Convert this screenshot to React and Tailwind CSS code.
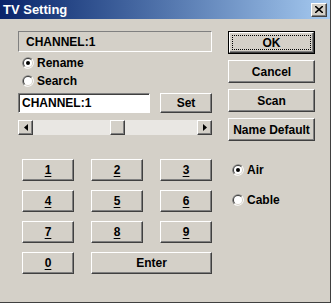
import React from 'react';

const font = { fontFamily: '"Liberation Sans", Arial, sans-serif' };

function Btn({ children, className = '', isDefault = false }) {
  if (isDefault) {
    return (
      <div className={`border border-black bg-[#d4d0c8] ${className}`}>
        <div className="h-full border-t border-l border-t-white border-l-white border-b border-r border-b-[#404040] border-r-[#404040] shadow-[inset_-1px_-1px_0_#808080] p-[2px]">
          <div className="flex h-full items-center justify-center border border-dotted border-black text-[12px] font-bold text-black">
            {children}
          </div>
        </div>
      </div>
    );
  }
  return (
    <div
      className={`flex items-center justify-center bg-[#d4d0c8] border-t border-l border-t-white border-l-white border-b border-r border-b-[#404040] border-r-[#404040] shadow-[inset_-1px_-1px_0_#808080] text-[12px] font-bold text-black ${className}`}
    >
      {children}
    </div>
  );
}

function Radio({ checked, label }) {
  return (
    <div className="flex items-center gap-[3px] h-[13px]">
      <svg width="12" height="12" viewBox="0 0 12 12">
        <path d="M10.24 1.76 A6 6 0 0 0 1.76 10.24" fill="#808080" />
        <path d="M1.76 10.24 A6 6 0 0 0 10.24 1.76" fill="#ffffff" />
        <circle cx="6" cy="6" r="5" fill="#d4d0c8" />
        <path d="M9.54 2.46 A5 5 0 0 0 2.46 9.54" fill="#404040" />
        <circle cx="6" cy="6" r="4" fill="#ffffff" />
        {checked && <circle cx="6" cy="6" r="2" fill="#000" />}
      </svg>
      <span className="text-[12px] font-bold text-black leading-none">{label}</span>
    </div>
  );
}

function ArrowBtn({ dir }) {
  return (
    <div className="flex h-[15px] w-[15px] items-center justify-center bg-[#d4d0c8] border-t border-l border-t-white border-l-white border-b border-r border-b-[#404040] border-r-[#404040] shadow-[inset_-1px_-1px_0_#808080]">
      <svg width="4" height="7" viewBox="0 0 4 7">
        {dir === 'left' ? <path d="M4 0 L0 3.5 L4 7 Z" fill="#000" /> : <path d="M0 0 L4 3.5 L0 7 Z" fill="#000" />}
      </svg>
    </div>
  );
}

export default function App() {
  const digits = ['1', '2', '3', '4', '5', '6', '7', '8', '9'];
  return (
    <div style={font} className="w-[331px] h-[303px] bg-[#d4d0c8] flex flex-col border-b border-r border-b-[#404040] border-r-[#404040] overflow-hidden">
      {/* Title bar */}
      <div className="h-[19px] shrink-0 flex items-center justify-between bg-gradient-to-r from-[#0a246a] to-[#a6caf0] pl-[3px] pr-[3px]">
        <span className="text-[13px] font-bold text-white">TV Setting</span>
        <div className="flex h-[14px] w-[16px] items-center justify-center bg-[#d4d0c8] border-t border-l border-t-white border-l-white border-b border-r border-b-[#404040] border-r-[#404040] shadow-[inset_-1px_-1px_0_#808080]">
          <svg width="8" height="7" viewBox="0 0 8 7">
            <path d="M0 0 L8 7 M8 0 L0 7" stroke="#000" strokeWidth="1.6" />
          </svg>
        </div>
      </div>

      <div className="flex pt-[12px] pl-[18px]">
        {/* Left column */}
        <div className="w-[194px] flex flex-col">
          <div className="h-[21px] flex items-center pl-[7px] border-t border-l border-t-[#808080] border-l-[#808080] border-b border-r border-b-white border-r-white text-[12px] font-bold text-black">
            CHANNEL:1
          </div>
          <div className="mt-[4px] pl-[4px] flex flex-col gap-[5px]">
            <Radio checked label="Rename" />
            <Radio label="Search" />
          </div>
          <div className="mt-[6px] flex items-center justify-between">
            <div className="w-[132px] h-[20px] bg-white flex items-center pl-[3px] border-t border-l border-t-[#808080] border-l-[#808080] border-b border-r border-b-white border-r-white shadow-[inset_1px_1px_0_#404040] text-[12px] font-bold text-black">
              CHANNEL:1
            </div>
            <Btn className="w-[52px] h-[20px]">Set</Btn>
          </div>
          <div className="mt-[7px] h-[15px] flex bg-[#e9e7e3]">
            <ArrowBtn dir="left" />
            <div className="flex-1 pl-[77px]">
              <div className="w-[15px] h-[15px] bg-[#d4d0c8] border-t border-l border-t-white border-l-white border-b border-r border-b-[#404040] border-r-[#404040] shadow-[inset_-1px_-1px_0_#808080]" />
            </div>
            <ArrowBtn dir="right" />
          </div>

          <div className="mt-[24px] ml-[4px] grid grid-cols-[52px_52px_52px] gap-x-[17px] gap-y-[9px]">
            {digits.map((d) => (
              <Btn key={d} className="h-[22px]">
                <span className="underline underline-offset-2">{d}</span>
              </Btn>
            ))}
            <Btn className="h-[22px]">
              <span className="underline underline-offset-2">0</span>
            </Btn>
            <Btn className="h-[22px] col-span-2">Enter</Btn>
          </div>
        </div>

        {/* Right column */}
        <div className="ml-[16px] w-[87px] flex flex-col">
          <Btn isDefault className="h-[23px]">OK</Btn>
          <div className="mt-[6px] flex flex-col gap-[6px]">
            <Btn className="h-[23px]">Cancel</Btn>
            <Btn className="h-[23px]">Scan</Btn>
            <Btn className="h-[23px]">Name Default</Btn>
          </div>
          <div className="mt-[22px] pl-[4px] flex flex-col gap-[17px]">
            <Radio checked label="Air" />
            <Radio label="Cable" />
          </div>
        </div>
      </div>
    </div>
  );
}
